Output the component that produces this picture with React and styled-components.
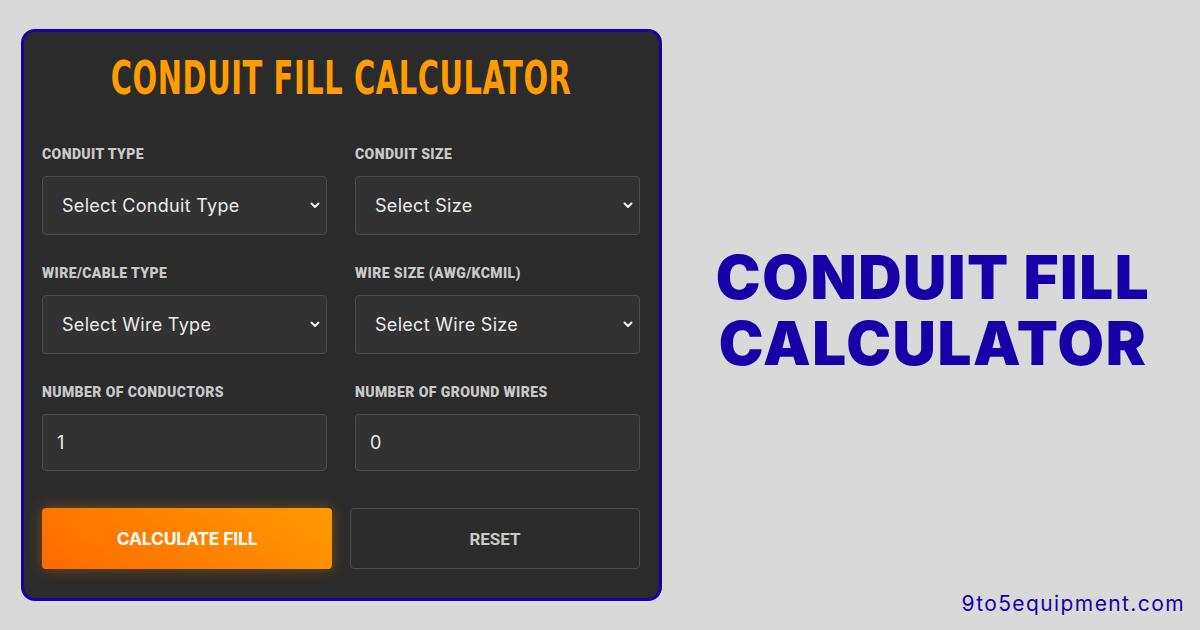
import React from "react";
import styled, { createGlobalStyle } from "styled-components";

const Global = createGlobalStyle`
  html, body { margin: 0; padding: 0; background: #d9d9d9; }
  * { box-sizing: border-box; }
`;

const Page = styled.div`
  width: 1200px;
  height: 630px;
  display: flex;
  padding: 29px 0 29px 21px;
  background: #d9d9d9;
`;

const Card = styled.div`
  width: 641px;
  height: 572px;
  flex: none;
  background: #2b2b2b;
  border: 3px solid #1800a8;
  border-radius: 14px;
  padding: 0 19px 0 18px;
  display: flex;
  flex-direction: column;
`;

const CardTitle = styled.h1`
  margin: 21px 0 0;
  align-self: center;
  width: max-content;
  white-space: nowrap;
  font-family: "DejaVu Sans Condensed", "Liberation Sans Narrow", sans-serif;
  font-weight: 700;
  font-size: 46px;
  line-height: 50px;
  color: #ff9c00;
  letter-spacing: 0.8px;
  transform: scaleX(0.7);
`;

const Grid = styled.div`
  margin-top: 44px;
  display: grid;
  grid-template-columns: 1fr 1fr;
  column-gap: 28px;
  row-gap: 31px;
`;

const Field = styled.div`
  display: flex;
  flex-direction: column;
  gap: 14px;
`;

const Label = styled.label`
  font-family: "Roboto", sans-serif;
  font-weight: 900;
  font-size: 14px;
  line-height: 15px;
  letter-spacing: 0.4px;
  color: #c9c9c9;
  text-transform: uppercase;
`;

const Box = styled.div`
  position: relative;
  height: ${(p) => p.$h}px;
  background: #323232;
  border: 1px solid #4a4a4a;
  border-radius: 4px;
  display: flex;
  align-items: center;
  padding: 0 ${(p) => p.$pad}px;
  font-family: "Inter", "Open Sans", sans-serif;
  font-size: 18px;
  letter-spacing: 0.3px;
  color: #ececec;
  svg { position: absolute; right: 6px; top: 50%; margin-top: -4px; }
`;

const Buttons = styled.div`
  margin-top: 37px;
  display: grid;
  grid-template-columns: 290px 290px;
  column-gap: 18px;
`;

const Btn = styled.button`
  height: 61px;
  border-radius: 4px;
  font-size: 17px;
  font-weight: 700;
  text-transform: uppercase;
  cursor: pointer;
  ${(p) =>
    p.$primary
      ? `
    border: none;
    color: #fff;
    font-family: "Inter", sans-serif;
    font-size: 17.5px;
    letter-spacing: -0.2px;
    background: linear-gradient(35deg, #ff6a00 0%, #ff9a00 100%);
    box-shadow: 0 0 14px rgba(255, 140, 0, 0.35);
  `
      : `
    border: 1px solid #4a4a4a;
    background: transparent;
    color: #c9c9c9;
    font-family: "Roboto", sans-serif;
  `}
`;

const Side = styled.div`
  flex: 1;
  display: flex;
  flex-direction: column;
`;

const Hero = styled.h2`
  flex: 1;
  margin: 0 0 0 4px;
  display: flex;
  align-items: center;
  justify-content: center;
  text-align: center;
  font-family: "Inter", sans-serif;
  font-weight: 900;
  font-size: 60px;
  line-height: 66px;
  color: #1800a8;
  letter-spacing: 1.6px;
`;

const Footer = styled.div`
  align-self: flex-end;
  margin: 0 15px -15px 0;
  font-family: "Inter", sans-serif;
  font-size: 21px;
  color: #1800a8;
  letter-spacing: 1.4px;
`;

const Chevron = () => (
  <svg width="10" height="7" viewBox="0 0 10 7">
    <path d="M1.5 1.5 L5 5 L8.5 1.5" fill="none" stroke="#f0f0f0" strokeWidth="2" strokeLinecap="round" strokeLinejoin="round" />
  </svg>
);

const fields = [
  { label: "Conduit Type", value: "Select Conduit Type", select: true },
  { label: "Conduit Size", value: "Select Size", select: true },
  { label: "Wire/Cable Type", value: "Select Wire Type", select: true },
  { label: "Wire Size (AWG/kcmil)", value: "Select Wire Size", select: true },
  { label: "Number of Conductors", value: "1" },
  { label: "Number of Ground Wires", value: "0" },
];

export default function App() {
  return (
    <>
      <Global />
      <Page>
        <Card>
          <CardTitle>CONDUIT FILL CALCULATOR</CardTitle>
          <Grid>
            {fields.map((f) => (
              <Field key={f.label}>
                <Label>{f.label}</Label>
                <Box $h={f.select ? 59 : 57} $pad={f.select ? 19 : 14}>
                  {f.value}
                  {f.select && <Chevron />}
                </Box>
              </Field>
            ))}
          </Grid>
          <Buttons>
            <Btn $primary>Calculate Fill</Btn>
            <Btn>Reset</Btn>
          </Buttons>
        </Card>
        <Side>
          <Hero>
            CONDUIT FILL
            <br />
            CALCULATOR
          </Hero>
          <Footer>9to5equipment.com</Footer>
        </Side>
      </Page>
    </>
  );
}
